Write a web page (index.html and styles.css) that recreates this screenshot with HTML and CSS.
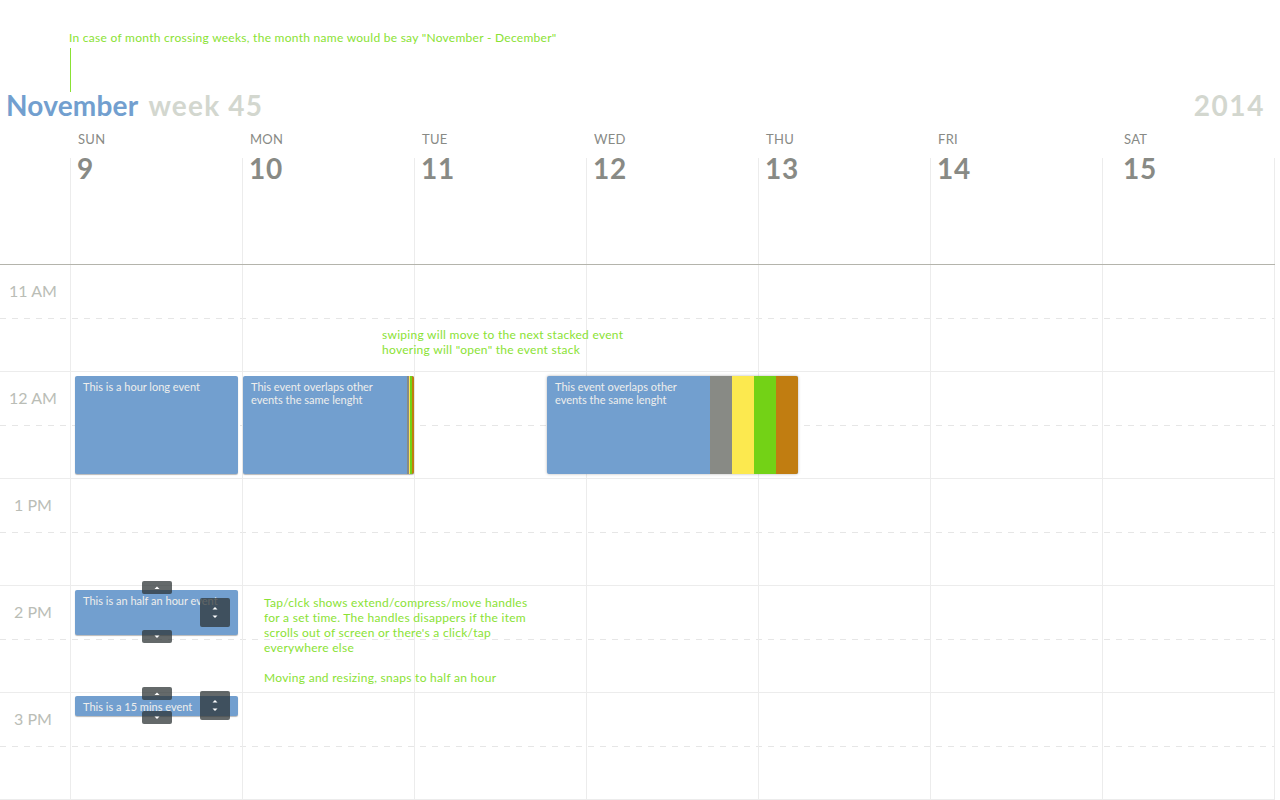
FILE: index.html
```html
<!DOCTYPE html>
<html lang="en">
<head>
<meta charset="utf-8">
<title>Week 45</title>
<link rel="stylesheet" href="styles.css">
</head>
<body>
<div class="page">
  <div class="note-top">In case of month crossing weeks, the month name would be say "November - December"</div>
  <div class="note-line"></div>

  <header class="title-row">
    <h1 class="title"><span class="month">November</span><span class="week">week 45</span></h1>
    <div class="year">2014</div>
  </header>

  <div class="days">
    <div class="day-spacer"></div>
    <div class="day"><div class="dname">SUN</div><div class="dnum">9</div></div>
    <div class="day"><div class="dname">MON</div><div class="dnum">10</div></div>
    <div class="day"><div class="dname">TUE</div><div class="dnum">11</div></div>
    <div class="day"><div class="dname">WED</div><div class="dnum">12</div></div>
    <div class="day"><div class="dname">THU</div><div class="dnum">13</div></div>
    <div class="day"><div class="dname">FRI</div><div class="dnum">14</div></div>
    <div class="day last"><div class="dname">SAT</div><div class="dnum">15</div></div>
  </div>

  <div class="grid-body">
    <div class="row first">
      <div class="time">11 AM</div>
      <div class="cell"></div><div class="cell"></div><div class="cell"></div><div class="cell"></div><div class="cell"></div><div class="cell"></div><div class="cell last"></div>
    </div>
    <div class="row">
      <div class="time">12 AM</div>
      <div class="cell"></div><div class="cell"></div><div class="cell"></div><div class="cell"></div><div class="cell"></div><div class="cell"></div><div class="cell last"></div>
    </div>
    <div class="row">
      <div class="time">1 PM</div>
      <div class="cell"></div><div class="cell"></div><div class="cell"></div><div class="cell"></div><div class="cell"></div><div class="cell"></div><div class="cell last"></div>
    </div>
    <div class="row">
      <div class="time">2 PM</div>
      <div class="cell"></div><div class="cell"></div><div class="cell"></div><div class="cell"></div><div class="cell"></div><div class="cell"></div><div class="cell last"></div>
    </div>
    <div class="row final">
      <div class="time">3 PM</div>
      <div class="cell"></div><div class="cell"></div><div class="cell"></div><div class="cell"></div><div class="cell"></div><div class="cell"></div><div class="cell last"></div>
    </div>

    <!-- events (placed by time) -->
    <div class="event ev-hour">
      <div class="ev-body">This is a hour long event</div>
    </div>

    <div class="event stack stack-closed">
      <div class="ev-body">This event overlaps other events the same lenght</div>
      <div class="strip s-gray"></div><div class="strip s-yellow"></div><div class="strip s-green"></div><div class="strip s-orange"></div>
    </div>

    <div class="event stack stack-open">
      <div class="ev-body">This event overlaps other events the same lenght</div>
      <div class="strip s-gray"></div><div class="strip s-yellow"></div><div class="strip s-green"></div><div class="strip s-orange"></div>
    </div>

    <div class="event ev-half">
      <div class="ev-body">This is an half an hour event</div>
      <div class="handle h-top"><svg width="30" height="13" viewBox="0 0 30 13"><polygon points="12.5,8 17.5,8 15,5.5" fill="#fff"/></svg></div>
      <div class="handle h-bottom"><svg width="30" height="13" viewBox="0 0 30 13"><polygon points="12.5,5.5 17.5,5.5 15,8" fill="#fff"/></svg></div>
      <div class="handle h-move"><svg width="30" height="29" viewBox="0 0 30 29"><polygon points="12.5,11.5 17.5,11.5 15,9" fill="#fff"/><polygon points="12.5,17.5 17.5,17.5 15,20" fill="#fff"/></svg></div>
    </div>

    <div class="event ev-quarter">
      <div class="ev-body">This is a 15 mins event</div>
      <div class="handle h-top"><svg width="30" height="13" viewBox="0 0 30 13"><polygon points="12.5,8 17.5,8 15,5.5" fill="#fff"/></svg></div>
      <div class="handle h-bottom"><svg width="30" height="13" viewBox="0 0 30 13"><polygon points="12.5,5.5 17.5,5.5 15,8" fill="#fff"/></svg></div>
      <div class="handle h-move"><svg width="30" height="29" viewBox="0 0 30 29"><polygon points="12.5,11.5 17.5,11.5 15,9" fill="#fff"/><polygon points="12.5,17.5 17.5,17.5 15,20" fill="#fff"/></svg></div>
    </div>

    <!-- annotations -->
    <div class="note note-stack">swiping will move to the next stacked event<br>hovering will "open" the event stack</div>
    <div class="note note-handles">Tap/clck shows extend/compress/move handles<br>for a set time. The handles disappers if the item<br>scrolls out of screen or there's a click/tap<br>everywhere else<br><br>Moving and resizing, snaps to half an hour</div>
  </div>
</div>
</body>
</html>
```

FILE: styles.css
```css
html, body {
  margin: 0;
  padding: 0;
  background: #ffffff;
}

body {
  font-family: Lato, "Open Sans", "DejaVu Sans", sans-serif;
  width: 1280px;
  height: 800px;
  overflow: hidden;
}

.page {
  width: 1280px;
}

/* top annotation */
.note-top {
  padding: 30px 0 0 69px;
  font-size: 12px;
  line-height: 15px;
  color: #8ae234;
  letter-spacing: 0.27px;
}

.note-line {
  margin: 3px 0 0 70px;
  width: 1px;
  height: 44px;
  background: #8ae234;
}

/* title row */
.title-row {
  display: flex;
  justify-content: space-between;
  align-items: flex-start;
  padding: 0 15px 0 6px;
  height: 26px;
}

.title {
  margin: 0;
  font-size: 28px;
  line-height: 26px;
  font-weight: 700;
  white-space: nowrap;
}

.month {
  color: #729fcf;
  letter-spacing: 0.2px;
}

.week {
  margin-left: 10px;
  color: #d3d7cf;
  letter-spacing: 1.2px;
}

.year {
  font-size: 28px;
  line-height: 26px;
  font-weight: 700;
  color: #d3d7cf;
  letter-spacing: 1.6px;
}

/* day header */
.days {
  display: grid;
  grid-template-columns: 70px repeat(6, 172px) 173px;
  margin-top: 13px;
}

.dname {
  height: 16px;
  padding-left: 8px;
  font-size: 13px;
  line-height: 16px;
  color: #888a85;
  letter-spacing: 0.3px;
}

.dnum {
  margin-top: 11px;
  height: 106px;
  box-sizing: border-box;
  border-left: 1px solid #ececec;
  padding-left: 6px;
  font-size: 28px;
  line-height: 20px;
  font-weight: 700;
  color: #888a85;
  letter-spacing: 0.8px;
}

.day.last .dname {
  padding-left: 22px;
}

.day.last .dnum {
  padding-left: 20px;
  border-right: 1px solid #ececec;
}

/* body grid */
.grid-body {
  position: relative;
  width: 1275px;
  border-bottom: 1px solid #ececec;
}

.row {
  display: grid;
  grid-template-columns: 70px repeat(6, 172px) 173px;
  height: 107px;
  box-sizing: border-box;
  border-top: 1px solid #ececec;
  background-image: linear-gradient(to right, #e6e6e6 50%, transparent 50%);
  background-size: 12px 1px;
  background-repeat: repeat-x;
  background-position: 0 53px;
}

.row.first {
  border-top-color: #b4b4ac;
}

.time {
  padding: 16px 4px 0 0;
  text-align: center;
  font-size: 16px;
  line-height: 20px;
  color: #babdb6;
}

.cell {
  border-left: 1px solid #ececec;
}

.cell.last {
  border-right: 1px solid #ececec;
}

/* events */
.event {
  position: absolute;
  box-sizing: border-box;
  display: flex;
  background: #729fcf;
  border-radius: 2px;
  box-shadow: 0 1px 1px rgba(0, 0, 0, 0.28);
}

.ev-body {
  flex: 1;
  padding: 4px 8px 0 8px;
  font-size: 11px;
  line-height: 13px;
  color: #eeeeec;
}

.ev-hour {
  left: 75px;
  top: 112px;
  width: 163px;
  height: 98px;
}

.stack {
  overflow: hidden;
}

.stack-closed {
  left: 243px;
  top: 112px;
  width: 171px;
  height: 98px;
}

.stack-closed .s-gray { width: 2px; }
.stack-closed .s-yellow { width: 1px; }
.stack-closed .s-green { width: 2px; }
.stack-closed .s-orange { width: 2px; }

.stack-open {
  left: 547px;
  top: 112px;
  width: 251px;
  height: 98px;
  box-shadow: 0 0 3px rgba(0, 0, 0, 0.3);
}

.stack-open .strip {
  width: 22px;
}

.strip {
  flex: none;
}

.s-gray { background: #888a85; }
.s-yellow { background: #fce94f; }
.s-green { background: #73d216; }
.s-orange { background: #c17d11; }

.ev-half {
  left: 75px;
  top: 326px;
  width: 163px;
  height: 45px;
}

.ev-quarter {
  left: 75px;
  top: 432px;
  width: 163px;
  height: 20px;
}

.ev-quarter .ev-body {
  padding-top: 4px;
}

/* handles */
.handle {
  position: absolute;
  border-radius: 2px;
  background: rgba(46, 52, 54, 0.74);
  line-height: 0;
}

.handle svg {
  display: block;
}

.h-top {
  left: 67px;
  width: 30px;
  height: 13px;
}

.h-bottom {
  left: 67px;
  width: 30px;
  height: 13px;
}

.h-move {
  left: 125px;
  width: 30px;
  height: 29px;
}

.ev-half .h-top { top: -9px; }
.ev-half .h-bottom { top: 40px; }
.ev-half .h-move { top: 8px; }

.ev-quarter .h-top { top: -9px; }
.ev-quarter .h-bottom { top: 15px; }
.ev-quarter .h-move { top: -5px; }

/* annotations */
.note {
  position: absolute;
  font-size: 12px;
  line-height: 15px;
  color: #8ae234;
  white-space: nowrap;
  letter-spacing: 0.28px;
}

.note-stack {
  left: 382px;
  top: 63px;
}

.note-handles {
  left: 264px;
  top: 331px;
}
```
